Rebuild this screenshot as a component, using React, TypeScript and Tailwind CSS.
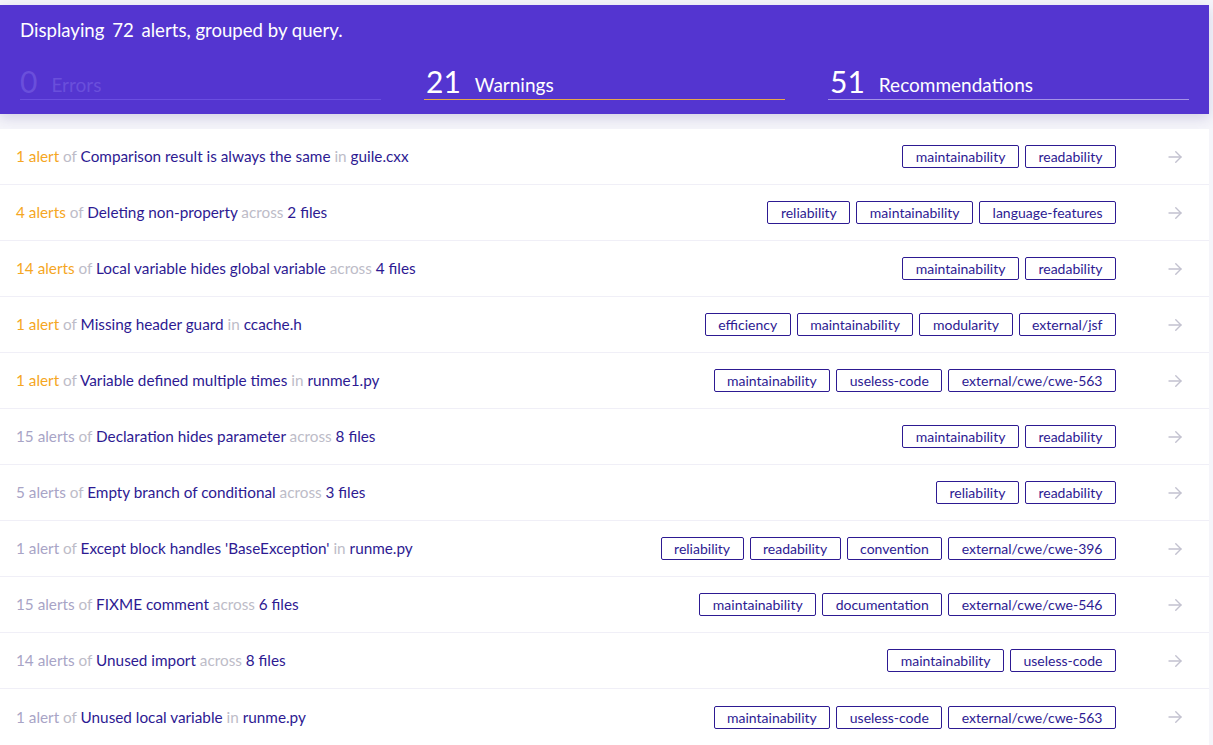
import React from "react";

type Row = {
  count: string;
  warn: boolean;
  name: string;
  prep: string;
  loc: string;
  tags: string[];
};

const rows: Row[] = [
  { count: "1 alert", warn: true, name: "Comparison result is always the same", prep: "in", loc: "guile.cxx", tags: ["maintainability", "readability"] },
  { count: "4 alerts", warn: true, name: "Deleting non-property", prep: "across", loc: "2 files", tags: ["reliability", "maintainability", "language-features"] },
  { count: "14 alerts", warn: true, name: "Local variable hides global variable", prep: "across", loc: "4 files", tags: ["maintainability", "readability"] },
  { count: "1 alert", warn: true, name: "Missing header guard", prep: "in", loc: "ccache.h", tags: ["efficiency", "maintainability", "modularity", "external/jsf"] },
  { count: "1 alert", warn: true, name: "Variable defined multiple times", prep: "in", loc: "runme1.py", tags: ["maintainability", "useless-code", "external/cwe/cwe-563"] },
  { count: "15 alerts", warn: false, name: "Declaration hides parameter", prep: "across", loc: "8 files", tags: ["maintainability", "readability"] },
  { count: "5 alerts", warn: false, name: "Empty branch of conditional", prep: "across", loc: "3 files", tags: ["reliability", "readability"] },
  { count: "1 alert", warn: false, name: "Except block handles 'BaseException'", prep: "in", loc: "runme.py", tags: ["reliability", "readability", "convention", "external/cwe/cwe-396"] },
  { count: "15 alerts", warn: false, name: "FIXME comment", prep: "across", loc: "6 files", tags: ["maintainability", "documentation", "external/cwe/cwe-546"] },
  { count: "14 alerts", warn: false, name: "Unused import", prep: "across", loc: "8 files", tags: ["maintainability", "useless-code"] },
  { count: "1 alert", warn: false, name: "Unused local variable", prep: "in", loc: "runme.py", tags: ["maintainability", "useless-code", "external/cwe/cwe-563"] },
];

function Arrow() {
  return (
    <svg width="18" height="18" viewBox="0 0 24 24" fill="none" stroke="#c2c1cf" strokeWidth="1.8" strokeLinecap="round" strokeLinejoin="round">
      <path d="M4 12h16" />
      <path d="M13 5l7 7-7 7" />
    </svg>
  );
}

export default function App() {
  return (
    <div className="min-h-[745px] w-[1213px] bg-[#f5f5fa] pt-[5px]" style={{ fontFamily: "Lato, 'Noto Sans', sans-serif" }}>
      <div className="w-[1209px] bg-[#5435d0] px-[20px] pt-[15px] pb-[14px] shadow-[0_4px_12px_rgba(60,50,140,0.18)]">
        <div className="text-[18.6px] leading-[20px] text-white">
          Displaying <span className="mx-[3px]">72</span> alerts, grouped by query.
        </div>
        <div className="mt-[25px] flex gap-[43px]">
          <div className="flex w-[361px] items-end border-b border-[#6a4ee0] pb-[2px]">
            <span className="text-[30px] leading-[32px] text-[#6a4fdb]">0</span>
            <span className="ml-[14px] text-[19px] leading-[24px] text-[#6a4fdb]">Errors</span>
          </div>
          <div className="flex w-[361px] items-end border-b border-[#e6a84a] pb-[2px] pl-[2px]">
            <span className="text-[30px] leading-[32px] text-white">21</span>
            <span className="ml-[14px] text-[19px] leading-[24px] text-white">Warnings</span>
          </div>
          <div className="flex w-[361px] items-end border-b border-[#a593e6] pb-[2px] pl-[2px]">
            <span className="text-[30px] leading-[32px] text-white">51</span>
            <span className="ml-[14px] text-[19px] leading-[24px] text-white">Recommendations</span>
          </div>
        </div>
      </div>
      <div className="mt-[15px] w-[1209px] border-b border-[#dcdae8] bg-white">
        {rows.map((r, i) => (
          <div key={i} className={"flex h-[56px] items-center pl-[16px] " + (i < rows.length - 1 ? "border-b border-[#f0eff7]" : "")}>
            <div className="flex-1 text-[15.3px] text-[#2d1a92]">
              <span className={r.warn ? "text-[#f5a623]" : "text-[#a8a4c6]"}>{r.count}</span>
              <span className="text-[#bdbcc8]"> of </span>
              <span>{r.name}</span>
              <span className="text-[#bdbcc8]"> {r.prep} </span>
              <span>{r.loc}</span>
            </div>
            <div className="flex gap-[6px]">
              {r.tags.map((t) => (
                <span key={t} className="flex h-[23px] items-center rounded-[2px] border border-[#2d1a92] px-[12.5px] text-[14px] text-[#2d1a92]">
                  {t}
                </span>
              ))}
            </div>
            <div className="flex w-[93px] justify-end pr-[25px]">
              <Arrow />
            </div>
          </div>
        ))}
      </div>
    </div>
  );
}
